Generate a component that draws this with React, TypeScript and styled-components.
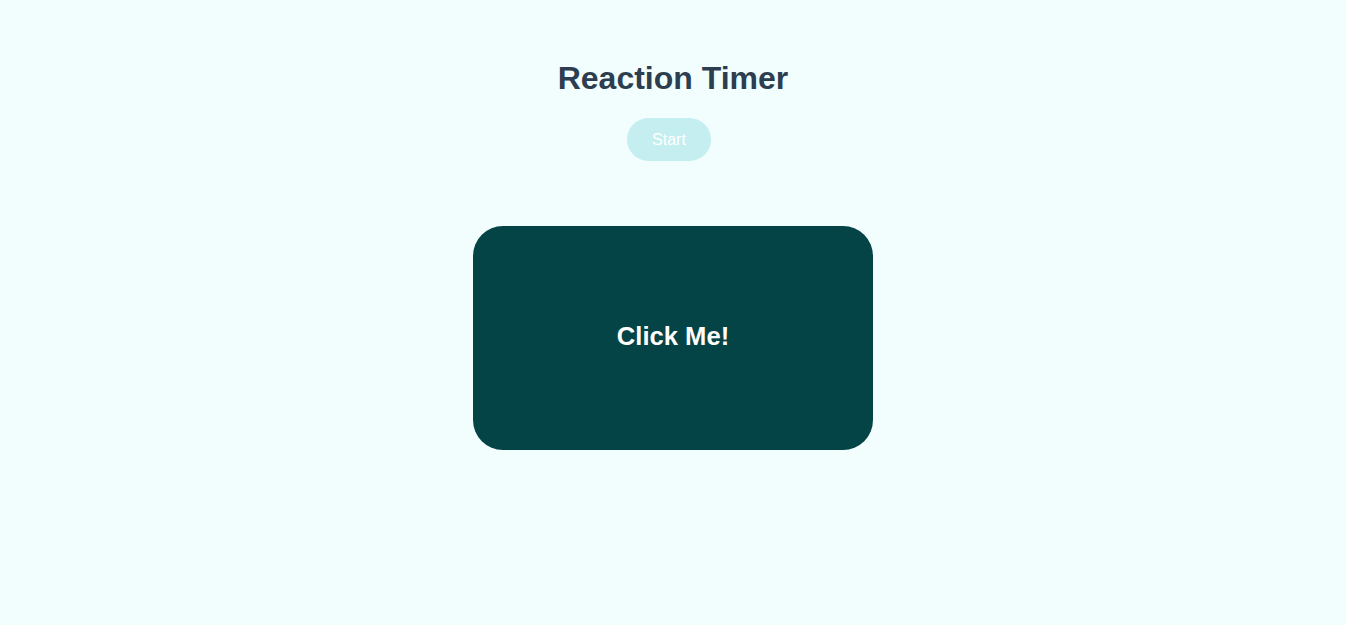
import React from "react";
import styled, { createGlobalStyle } from "styled-components";

const GlobalStyle = createGlobalStyle`
  html, body {
    margin: 0;
    padding: 0;
    background: #f2fefe;
    font-family: "Liberation Sans", Arial, sans-serif;
  }
`;

const Page = styled.main`
  min-height: 625px;
  display: flex;
  flex-direction: column;
  align-items: center;
  padding-top: 60px;
  box-sizing: border-box;
`;

const Title = styled.h1`
  margin: 0;
  font-size: 32px;
  font-weight: 700;
  line-height: normal;
  color: #2c3e50;
`;

const Controls = styled.div`
  margin-top: 21px;
  display: flex;
  padding-right: 8px;
`;

const StartButton = styled.button`
  width: 84px;
  height: 43px;
  border: none;
  border-radius: 22px;
  background: #c4eef0;
  color: #ffffff;
  font-family: "Liberation Sans", Arial, sans-serif;
  font-size: 16px;
  cursor: pointer;
  padding: 0;
`;

const Target = styled.div`
  margin-top: 65px;
  width: 400px;
  height: 224px;
  box-sizing: border-box;
  padding-bottom: 4px;
  border-radius: 30px;
  background: #044346;
  color: #ffffff;
  display: flex;
  align-items: center;
  justify-content: center;
  font-size: 25.6px;
  font-weight: 700;
  cursor: pointer;
  user-select: none;
`;

export default function App() {
  return (
    <>
      <GlobalStyle />
      <Page>
        <Title>Reaction Timer</Title>
        <Controls>
          <StartButton disabled>Start</StartButton>
        </Controls>
        <Target>Click Me!</Target>
      </Page>
    </>
  );
}
